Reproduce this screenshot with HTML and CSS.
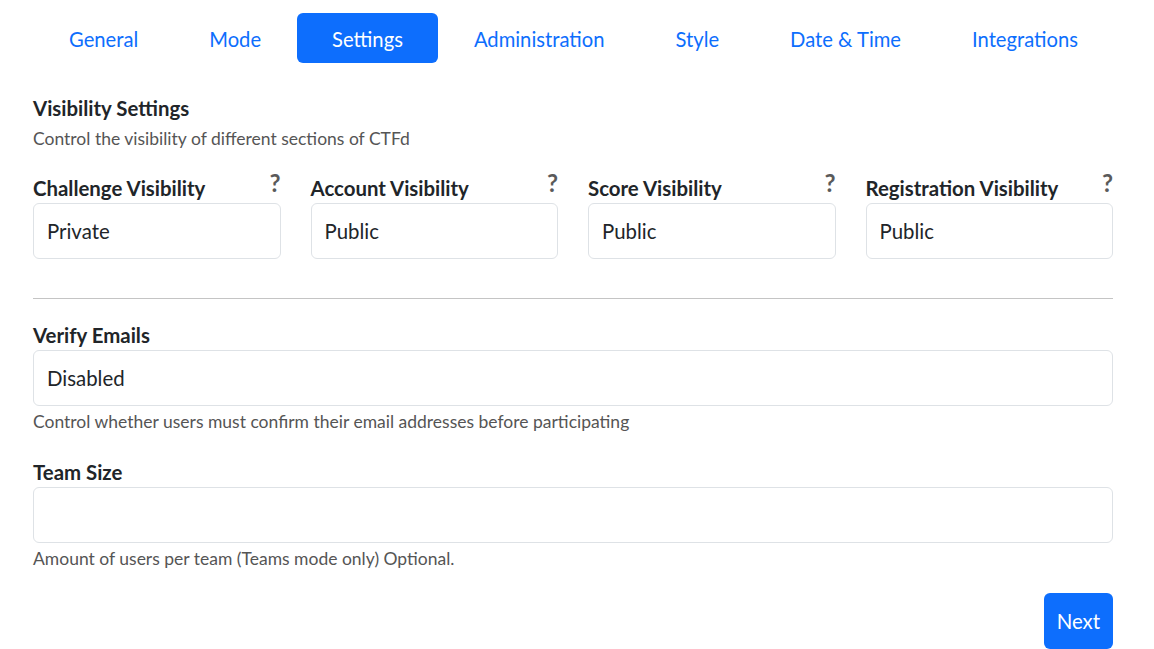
FILE: index.html
```html
<!DOCTYPE html>
<html>
<head>
<meta charset="utf-8">
<link rel="stylesheet" href="styles.css">
</head>
<body>
<div class="wrap">
  <nav class="tabs">
    <a class="tab">General</a>
    <a class="tab">Mode</a>
    <a class="tab active">Settings</a>
    <a class="tab">Administration</a>
    <a class="tab">Style</a>
    <a class="tab">Date &amp; Time</a>
    <a class="tab">Integrations</a>
  </nav>

  <section class="section">
    <h5 class="title">Visibility Settings</h5>
    <p class="sub">Control the visibility of different sections of CTFd</p>
    <div class="grid4">
      <div class="field">
        <div class="label-row"><span class="label">Challenge Visibility</span><span class="help">?</span></div>
        <div class="input">Private</div>
      </div>
      <div class="field">
        <div class="label-row"><span class="label">Account Visibility</span><span class="help">?</span></div>
        <div class="input">Public</div>
      </div>
      <div class="field">
        <div class="label-row"><span class="label">Score Visibility</span><span class="help">?</span></div>
        <div class="input">Public</div>
      </div>
      <div class="field">
        <div class="label-row"><span class="label">Registration Visibility</span><span class="help">?</span></div>
        <div class="input">Public</div>
      </div>
    </div>
  </section>

  <hr class="rule">

  <div class="block">
    <div class="label">Verify Emails</div>
    <div class="input">Disabled</div>
    <div class="hint">Control whether users must confirm their email addresses before participating</div>
  </div>

  <div class="block">
    <div class="label">Team Size</div>
    <div class="input"></div>
    <div class="hint">Amount of users per team (Teams mode only) Optional.</div>
  </div>

  <div class="actions">
    <button class="btn">Next</button>
  </div>
</div>
</body>
</html>
```

FILE: styles.css
```css
* { box-sizing: border-box; }
html, body { margin: 0; padding: 0; background: #fff; }
body {
  font-family: Lato, "Open Sans", sans-serif;
  color: #212529;
  overflow: hidden;
}
.wrap {
  width: 1080px;
  margin-left: 33px;
  padding-top: 13px;
}
.tabs {
  display: flex;
  justify-content: space-between;
  padding-left: 1px;
}
.tab {
  display: block;
  flex: 0 0 auto;
  white-space: nowrap;
  height: 50px;
  line-height: 52px;
  padding: 0 35px;
  font-size: 20.2px;
  color: #0d6efd;
  border-radius: 6px;
  overflow: hidden;
}
.tab.active {
  background: #0d6efd;
  color: #fff;
}
.section { margin-top: 32px; }
.title {
  margin: 0;
  font-size: 20.4px;
  font-weight: 700;
  line-height: 26px;
}
.sub {
  margin: 6px 0 0;
  font-size: 17.5px;
  line-height: 24px;
  color: #555;
}
.grid4 {
  display: grid;
  grid-template-columns: repeat(4, 1fr);
  gap: 30px;
  margin-top: 22px;
}
.label-row {
  display: flex;
  justify-content: space-between;
  align-items: flex-start;
}
.label {
  font-size: 20.4px;
  font-weight: 700;
  line-height: 30px;
}
.help {
  font-size: 24px;
  font-weight: 700;
  color: #5a5a5a;
  line-height: 22px;
  margin-top: -1px;
}
.input {
  height: 56px;
  border: 1px solid #dee2e6;
  border-radius: 6px;
  padding: 0 13px;
  font-size: 20.4px;
  line-height: 55px;
  color: #212529;
}
.rule {
  border: 0;
  border-top: 1px solid #c4c4c4;
  margin: 39px 0 0;
}
.block { margin-top: 21px; }
.block + .block { margin-top: 23px; }
.hint {
  font-size: 17.5px;
  line-height: 24px;
  color: #555;
  margin-top: 4px;
}
.actions {
  display: flex;
  justify-content: flex-end;
  margin-top: 22px;
}
.btn {
  font-family: inherit;
  background: #0d6efd;
  color: #fff;
  border: 0;
  border-radius: 6px;
  height: 56px;
  padding: 0 13px;
  font-size: 20.4px;
}
```
